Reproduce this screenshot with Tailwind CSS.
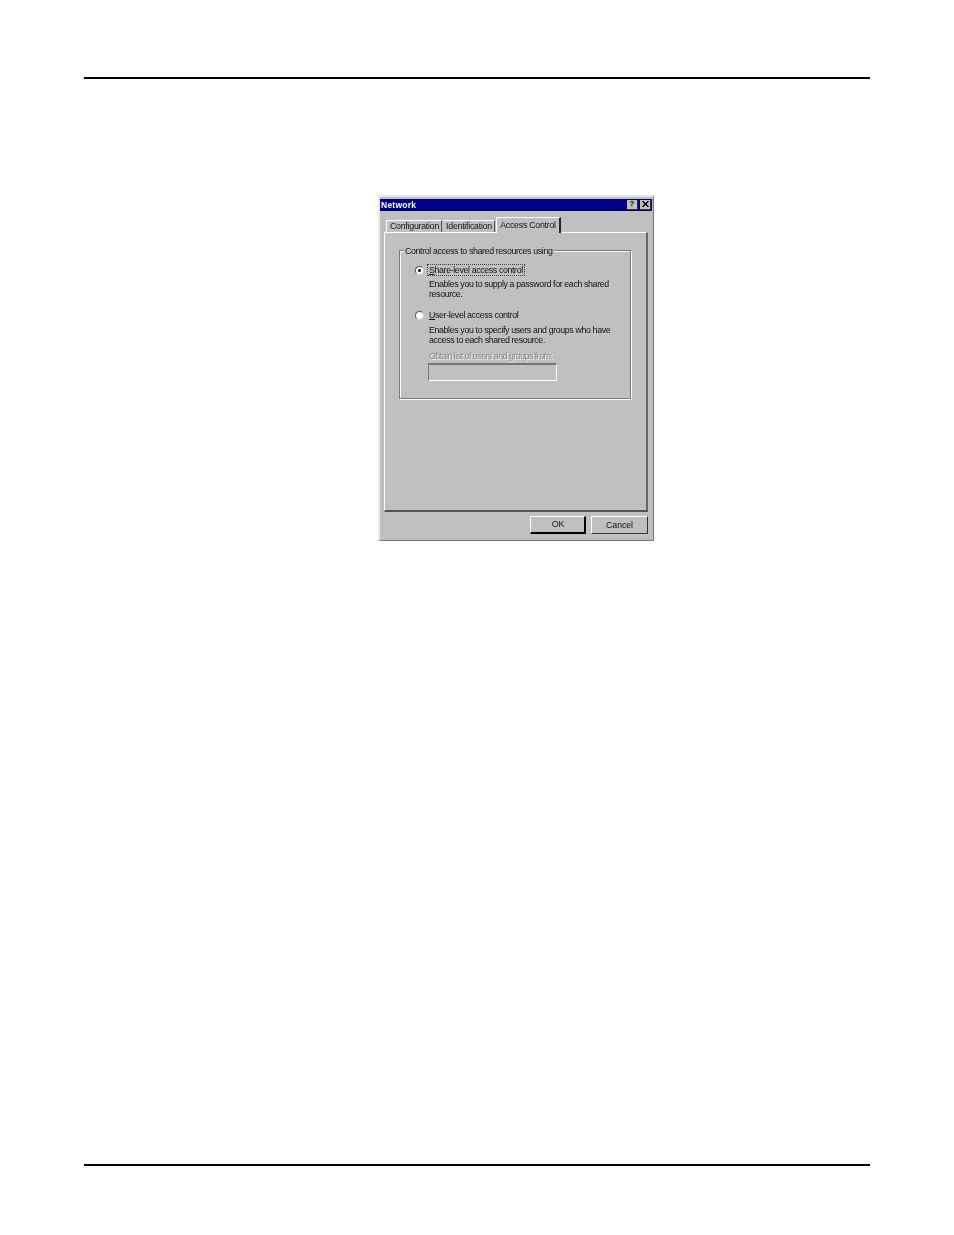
<!DOCTYPE html>
<html>
<head>
<meta charset="utf-8">
<script src="https://cdn.jsdelivr.net/npm/@tailwindcss/browser@4"></script>
</head>
<body class="bg-white">
<div class="w-[954px] h-[1235px] flex flex-col font-['Liberation_Sans',sans-serif] text-[8.8px] leading-[10px] text-[#111]">
  <div class="mt-[77px] mx-[84px] h-[2px] bg-black"></div>
  <div class="mt-[116px] ml-[378px] w-[276px] h-[346px] bg-[#c0c0c0] blur-[0.25px] border-t-2 border-l-2 border-t-[#e8e8e8] border-l-[#e8e8e8] border-r border-b border-r-[#777] border-b-[#777] flex flex-col pt-[2px]">
    <div class="h-[12px] mr-[1px] bg-[#000080] flex items-center justify-between pr-[1px] pl-[1px] pb-[1px]">
      <span class="text-white font-bold text-[8.5px] tracking-[0.25px]">Network</span>
      <div class="flex gap-[2px]">
        <div class="w-[11px] h-[10px] bg-[#c0c0c0] border-r border-b border-[#333] flex items-center justify-center font-bold text-[8px] text-black">?</div>
        <div class="w-[11px] h-[10px] bg-[#c0c0c0] border-r border-b border-[#333] flex items-center justify-center">
          <svg width="7" height="6" viewBox="0 0 7 6"><path d="M0.5 0L6.5 6M6.5 0L0.5 6" stroke="#000" stroke-width="1.4"/></svg>
        </div>
      </div>
    </div>
    <div class="flex items-end h-[21px] ml-[6px] relative z-10 tracking-[-0.25px]">
      <div class="w-[56px] h-[12px] pb-[2px] pl-[1px] border-l border-t border-r border-t-white border-l-white border-r-[#555] flex items-center justify-center">Configuration</div>
      <div class="ml-[1px] w-[52px] h-[12px] pb-[2px] pl-[1px] border-t border-r border-t-white border-r-[#555] flex items-center justify-center">Identification</div>
      <div class="ml-[1px] w-[65px] h-[16px] mb-[-1px] pb-[2px] bg-[#c0c0c0] border-l border-t border-r-2 border-t-white border-l-white border-r-[#222] flex items-center justify-center">Access Control</div>
    </div>
    <div class="ml-[4px] w-[264px] h-[280px] border-t border-l border-t-white border-l-white border-r-2 border-b-2 border-r-[#666] border-b-[#555] pt-[17px] pl-[14px]">
      <div class="relative w-[232px] h-[149px] border border-[#777] shadow-[1px_1px_0_#fff,inset_1px_1px_0_#fff] pl-[15px] pt-[13px] tracking-[-0.36px]">
        <span class="absolute -top-[5px] left-[4px] pl-[1px] pr-[2px] bg-[#c0c0c0] whitespace-nowrap">Control access to shared resources using</span>
        <div class="flex items-center h-[12px]">
          <div class="w-[9px] h-[9px] rounded-full bg-white border border-[#555] border-r-[#ccc] border-b-[#ccc] flex items-center justify-center"><div class="w-[3px] h-[3px] rounded-full bg-black"></div></div>
          <span class="ml-[3px] px-[1px] border border-dotted border-[#444] whitespace-nowrap"><u>S</u>hare-level access control</span>
        </div>
        <div class="ml-[14px] mt-[3px] whitespace-nowrap">Enables you to supply a password for each shared<br>resource.</div>
        <div class="flex items-center h-[12px] mt-[10px]">
          <div class="w-[9px] h-[9px] rounded-full bg-white border border-[#555] border-r-[#ccc] border-b-[#ccc]"></div>
          <span class="ml-[5px] whitespace-nowrap"><u>U</u>ser-level access control</span>
        </div>
        <div class="ml-[14px] mt-[4px] whitespace-nowrap">Enables you to specify users and groups who have<br>access to each shared resource.</div>
        <div class="ml-[14px] mt-[6px] text-[#8a8a8a] tracking-[-0.5px] [text-shadow:1px_1px_0_#eee] whitespace-nowrap">Obtain list of users and groups from:</div>
        <div class="ml-[13px] mt-[2px] w-[129px] h-[18px] border-t-2 border-l border-t-[#777] border-l-[#777] border-r border-b border-r-white border-b-white"></div>
      </div>
    </div>
    <div class="flex justify-end gap-[5px] mt-[4px] mr-[5px]">
      <div class="w-[56px] h-[18px] pl-[1px] pb-[1px] border-t border-l border-t-white border-l-white border-r-2 border-b-2 border-r-black border-b-black flex items-center justify-center">OK</div>
      <div class="w-[57px] h-[18px] pb-[1px] border-t border-l border-t-white border-l-white border-r border-b border-r-[#333] border-b-[#333] flex items-center justify-center tracking-[-0.1px]">Cancel</div>
    </div>
  </div>
  <div class="mt-[623px] mx-[84px] h-[2px] bg-black"></div>
</div>
</body>
</html>
